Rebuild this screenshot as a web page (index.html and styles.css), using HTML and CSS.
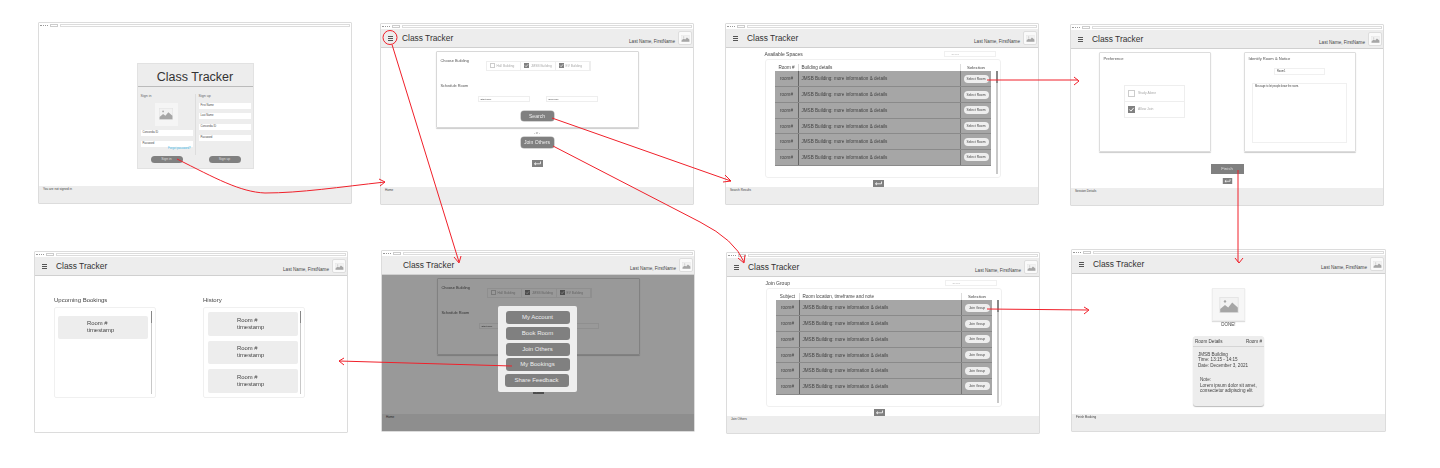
FILE: index.html
```html
<!DOCTYPE html>
<html lang="en">
<head>
  <meta charset="UTF-8">
  <title>Class Tracker wireframes</title>
  <link rel="stylesheet" href="styles.css">
</head>
<body>

  <svg class="defs" width="0" height="0">
    <symbol id="picture" viewBox="0 0 24 20">
      <rect x="0.5" y="0.5" width="23" height="19" fill="#f2f2f2" stroke="#e2e2e2"/>
      <circle cx="7" cy="5.5" r="1.5" fill="#a6a6a6"/>
      <path d="M1 19V15L7 10L11 13L16 7L23 13V19Z" fill="#a6a6a6"/>
    </symbol>
    <symbol id="back" viewBox="0 0 11 7">
      <rect width="11" height="7" fill="#808080"/>
      <path d="M8.5 1.5V3.8H2.5M4 2.5L2.5 3.8L4 5.1" fill="none" stroke="#fff" stroke-width="0.8"/>
    </symbol>
    <symbol id="tick" viewBox="0 0 6 6">
      <rect width="6" height="6" fill="#808080"/>
      <path d="M1.2 3L2.5 4.4L4.9 1.6" fill="none" stroke="#fff" stroke-width="0.8"/>
    </symbol>
  </svg>

  <div class="board">

    <!-- sign in -->
    <section class="win win-signin">
      <div class="chrome"><i></i><b></b><u></u></div>
      <div class="content signin">
        <div class="login-card">
          <h1>Class Tracker</h1>
          <div class="login-cols">
            <div class="login-col first">
              <p class="tiny">Sign in</p>
              <div class="pic-box"><svg width="14" height="12"><use href="#picture"/></svg></div>
              <div class="field">Concordia ID</div>
              <div class="field gap">Password</div>
              <a class="forgot">Forgot password?</a>
              <div class="pill">Sign in</div>
            </div>
            <div class="login-col">
              <p class="tiny">Sign up</p>
              <div class="field">First Name</div>
              <div class="field">Last Name</div>
              <div class="field">Concordia ID</div>
              <div class="field">Password</div>
              <div class="pill">Sign up</div>
            </div>
          </div>
        </div>
      </div>
      <div class="status">You are not signed in</div>
    </section>

    <!-- home -->
    <section class="win win-home">
      <div class="chrome"><i></i><b></b><u></u></div>
      <header class="appbar">
        <span class="burger"></span>
        <span class="title">Class Tracker</span>
        <span class="user">Last Name, FirstName</span>
        <span class="avatar"><svg width="9" height="7"><use href="#picture"/></svg></span>
      </header>
      <div class="content home">
        <div class="home-card">
          <p class="label">Choose Building</p>
          <div class="buildings">
            <span><em class="box"></em>Hall Building</span>
            <span><svg width="5" height="5"><use href="#tick"/></svg>JMSB Building</span>
            <span><svg width="5" height="5"><use href="#tick"/></svg>EV Building</span>
          </div>
          <p class="label schedule">Schedule Room</p>
          <div class="times">
            <div class="time">Start Time</div>
            <div class="time">End Time</div>
          </div>
          <div class="btn search">Search</div>
        </div>
        <div class="or">- or -</div>
        <div class="btn join">Join Others</div>
        <svg class="back" width="11" height="7"><use href="#back"/></svg>
      </div>
      <div class="status">Home</div>
    </section>

    <!-- search results -->
    <section class="win win-results">
      <div class="chrome"><i></i><b></b><u></u></div>
      <header class="appbar">
        <span class="burger"></span>
        <span class="title">Class Tracker</span>
        <span class="user">Last Name, FirstName</span>
        <span class="avatar"><svg width="9" height="7"><use href="#picture"/></svg></span>
      </header>
      <div class="content list">
        <div class="list-head"><span>Available Spaces</span><span class="find">Search</span></div>
        <div class="panel">
          <table>
            <thead><tr><th class="c1">Room #</th><th class="c2">Building details</th><th class="c3">Selection</th></tr></thead>
            <tbody>
              <tr><td class="c1">room#</td><td class="c2">JMSB Building: more information &amp; details</td><td class="c3"><span class="select">Select Room</span></td></tr>
              <tr><td class="c1">room#</td><td class="c2">JMSB Building: more information &amp; details</td><td class="c3"><span class="select">Select Room</span></td></tr>
              <tr><td class="c1">room#</td><td class="c2">JMSB Building: more information &amp; details</td><td class="c3"><span class="select">Select Room</span></td></tr>
              <tr><td class="c1">room#</td><td class="c2">JMSB Building: more information &amp; details</td><td class="c3"><span class="select">Select Room</span></td></tr>
              <tr><td class="c1">room#</td><td class="c2">JMSB Building: more information &amp; details</td><td class="c3"><span class="select">Select Room</span></td></tr>
              <tr><td class="c1">room#</td><td class="c2">JMSB Building: more information &amp; details</td><td class="c3"><span class="select">Select Room</span></td></tr>
            </tbody>
          </table>
          <span class="scroll"></span>
        </div>
        <svg class="back" width="11" height="7"><use href="#back"/></svg>
      </div>
      <div class="status">Search Results</div>
    </section>

    <!-- session details -->
    <section class="win win-session">
      <div class="chrome"><i></i><b></b><u></u></div>
      <header class="appbar">
        <span class="burger"></span>
        <span class="title">Class Tracker</span>
        <span class="user">Last Name, FirstName</span>
        <span class="avatar"><svg width="9" height="7"><use href="#picture"/></svg></span>
      </header>
      <div class="content session">
        <div class="session-cards">
          <div class="session-card">
            <p class="label">Preference</p>
            <div class="prefs">
              <div class="pref"><em class="box big"></em>Study Alone</div>
              <div class="pref"><svg width="7" height="7"><use href="#tick"/></svg>Allow Join</div>
            </div>
          </div>
          <div class="session-card">
            <p class="label">Identify Room &amp; Notice</p>
            <div class="name-box">Room1</div>
            <div class="message">Message to let people know the room.</div>
          </div>
        </div>
        <div class="finish">Finish</div>
        <svg class="back" width="11" height="6"><use href="#back"/></svg>
      </div>
      <div class="status">Session Details</div>
    </section>

    <!-- bookings -->
    <section class="win win-bookings">
      <div class="chrome"><i></i><b></b><u></u></div>
      <header class="appbar">
        <span class="burger"></span>
        <span class="title">Class Tracker</span>
        <span class="user">Last Name, FirstName</span>
        <span class="avatar"><svg width="9" height="7"><use href="#picture"/></svg></span>
      </header>
      <div class="content bookings">
        <div class="book-col">
          <h2>Upcoming Bookings</h2>
          <div class="book-panel upcoming">
            <div class="book-item">Room #<br>timestamp</div>
            <span class="scroll"></span>
          </div>
        </div>
        <div class="book-col">
          <h2>History</h2>
          <div class="book-panel">
            <div class="book-item">Room #<br>timestamp</div>
            <div class="book-item">Room #<br>timestamp</div>
            <div class="book-item">Room #<br>timestamp</div>
            <span class="scroll"></span>
          </div>
        </div>
      </div>
    </section>

    <!-- home with menu open -->
    <section class="win win-menu">
      <div class="chrome"><i></i><b></b><u></u></div>
      <header class="appbar">
        <span class="burger off"></span>
        <span class="title">Class Tracker</span>
        <span class="user">Last Name, FirstName</span>
        <span class="avatar"><svg width="9" height="7"><use href="#picture"/></svg></span>
      </header>
      <div class="content home">
        <div class="home-card">
          <p class="label">Choose Building</p>
          <div class="buildings">
            <span><em class="box"></em>Hall Building</span>
            <span><svg width="5" height="5"><use href="#tick"/></svg>JMSB Building</span>
            <span><svg width="5" height="5"><use href="#tick"/></svg>EV Building</span>
          </div>
          <p class="label schedule">Schedule Room</p>
          <div class="times">
            <div class="time">Start Time</div>
            <div class="time">End Time</div>
          </div>
          <div class="btn search">Search</div>
        </div>
        <div class="or">- or -</div>
        <div class="btn join">Join Others</div>
        <svg class="back" width="11" height="7"><use href="#back"/></svg>
      </div>
      <div class="status">Home</div>
      <div class="dim"></div>
      <nav class="menu">
        <a>My Account</a>
        <a>Book Room</a>
        <a>Join Others</a>
        <a>My Bookings</a>
        <a class="shift">Share Feedback</a>
      </nav>
    </section>

    <!-- join group -->
    <section class="win win-join">
      <div class="chrome"><i></i><b></b><u></u></div>
      <header class="appbar">
        <span class="burger"></span>
        <span class="title">Class Tracker</span>
        <span class="user">Last Name, FirstName</span>
        <span class="avatar"><svg width="9" height="7"><use href="#picture"/></svg></span>
      </header>
      <div class="content list">
        <div class="list-head"><span>Join Group</span><span class="find">Search</span></div>
        <div class="panel">
          <table>
            <thead><tr><th class="c1">Subject</th><th class="c2">Room location, timeframe and note</th><th class="c3">Selection</th></tr></thead>
            <tbody>
              <tr><td class="c1">room#</td><td class="c2">JMSB Building: more information &amp; details</td><td class="c3"><span class="select">Join Group</span></td></tr>
              <tr><td class="c1">room#</td><td class="c2">JMSB Building: more information &amp; details</td><td class="c3"><span class="select">Join Group</span></td></tr>
              <tr><td class="c1">room#</td><td class="c2">JMSB Building: more information &amp; details</td><td class="c3"><span class="select">Join Group</span></td></tr>
              <tr><td class="c1">room#</td><td class="c2">JMSB Building: more information &amp; details</td><td class="c3"><span class="select">Join Group</span></td></tr>
              <tr><td class="c1">room#</td><td class="c2">JMSB Building: more information &amp; details</td><td class="c3"><span class="select">Join Group</span></td></tr>
              <tr><td class="c1">room#</td><td class="c2">JMSB Building: more information &amp; details</td><td class="c3"><span class="select">Join Group</span></td></tr>
            </tbody>
          </table>
          <span class="scroll"></span>
        </div>
        <svg class="back" width="11" height="7"><use href="#back"/></svg>
      </div>
      <div class="status">Join Others</div>
    </section>

    <!-- finish booking -->
    <section class="win win-done">
      <div class="chrome"><i></i><b></b><u></u></div>
      <header class="appbar">
        <span class="burger"></span>
        <span class="title">Class Tracker</span>
        <span class="user">Last Name, FirstName</span>
        <span class="avatar"><svg width="9" height="7"><use href="#picture"/></svg></span>
      </header>
      <div class="content done">
        <div class="done-pic"><svg width="20" height="16"><use href="#picture"/></svg></div>
        <p class="done-text">DONE!</p>
        <div class="details">
          <div class="details-head"><span>Room Details</span><span>Room #</span></div>
          <div class="details-body">
            JMSB Building<br>Time: 13:15 - 14:15<br>Date: December 3, 2021
            <p>Note:<br>Lorem ipsum dolor sit amet,<br>consectetur adipiscing elit</p>
          </div>
        </div>
      </div>
      <div class="status">Finish Booking</div>
    </section>

    <!-- red flow arrows between the screens -->
    <svg class="flow" width="1440" height="468" viewBox="0 0 1440 468">
      <circle cx="390" cy="37.5" r="7"/>
      <path d="M177 159C215 178 240 192 265 193C300 193 340 187 385 182M379 179L385 182L380 186"/>
      <path d="M392 44.500L459 262M454 257L459 263L461 256"/>
      <path d="M552 118L731 181M725 175L731 181L723 182"/>
      <path d="M553 146L700 222Q735 240 744 262M738 258L744 263L745 255"/>
      <path d="M987 80H1078M1074 77L1079 81L1074 85"/>
      <path d="M1238 170V262M1235 258L1239 263L1243 258"/>
      <path d="M987 309L1088 310M1084 307L1089 310L1084 314"/>
      <path d="M512 366L339 361M344 358L339 361L344 365"/>
    </svg>

  </div>

</body>
</html>
```

FILE: styles.css
```css
:root {
  --line: #dcdcdc;
  --bar: #ededed;
  --gray: #808080;
  --table: #a6a6a6;
  --ink: #444;
  --dim: #999;
}

html, body {
  margin: 0;
  padding: 0;
  background: #fff;
  color: var(--ink);
  font-family: "Liberation Sans", Arial, sans-serif;
}

p, h1, h2 {
  margin: 0;
  font-weight: normal;
}

em {
  font-style: normal;
}

.defs {
  position: absolute;
}

.board {
  position: relative;
  width: 1440px;
  height: 468px;
  overflow: hidden;
  filter: blur(0.4px);
}

/* windows sit on a free canvas */
.win {
  position: absolute;
  width: 314px;
  height: 182px;
  box-sizing: border-box;
  border: 1px solid var(--line);
  border-radius: 1px;
  background: #fff;
  display: flex;
  flex-direction: column;
}

.win-signin { left: 38px; top: 22px; }
.win-home { left: 380px; top: 23px; }
.win-results { left: 725px; top: 23px; }
.win-session { left: 1070px; top: 24px; }
.win-bookings { left: 34px; top: 251px; }
.win-menu { left: 381px; top: 250px; }
.win-join { left: 726px; top: 252px; }
.win-done { left: 1071px; top: 249px; height: 183px; width: 315px; }

.chrome {
  height: 5px;
  flex: none;
  display: flex;
  align-items: center;
  gap: 2px;
  padding: 0 1px;
}

.chrome i {
  width: 8px;
  height: 1px;
  border-top: 1px dotted #999;
}

.chrome b {
  width: 6px;
  height: 1px;
  border: 1px solid #ccc;
}

.chrome u {
  flex: 1;
  height: 1px;
  border: 1px solid var(--line);
}

.appbar {
  height: 19px;
  flex: none;
  background: var(--bar);
  border-bottom: 1px solid #d0d0d0;
  box-sizing: border-box;
  display: flex;
  align-items: center;
  padding: 0 1px 0 7px;
}

.burger {
  width: 5px;
  height: 1px;
  background: #555;
  box-shadow: 0 -2px 0 #555, 0 2px 0 #555;
  margin-right: 9px;
  flex: none;
}

.burger.off {
  visibility: hidden;
}

.title {
  font-size: 8.4px;
  color: #333;
  flex: 1;
}

.user {
  font-size: 4.6px;
  align-self: flex-end;
  margin: 0 3px 3.500px 0;
}

.avatar {
  width: 14px;
  height: 14px;
  box-sizing: border-box;
  background: #fafafa;
  border: 1px solid #ddd;
  border-radius: 2px;
  display: flex;
  align-items: center;
  justify-content: center;
}

.content {
  flex: 1;
  min-height: 0;
}

.status {
  height: 17px;
  flex: none;
  background: var(--bar);
  font-size: 3.100px;
  padding: 1px 4px;
  box-sizing: border-box;
}

/* sign in */
.signin {
  display: flex;
  justify-content: center;
  padding-top: 35px;
}

.login-card {
  width: 117px;
  height: 106px;
  background: var(--bar);
  border: 1px solid #e2e2e2;
  box-sizing: border-box;
}

.login-card h1 {
  height: 23px;
  line-height: 26px;
  text-align: center;
  font-size: 12.5px;
  color: #333;
  border-bottom: 1px solid #bbb;
  box-sizing: border-box;
}

.login-cols {
  display: flex;
  padding-top: 7px;
}

.login-col {
  width: 58px;
  height: 70px;
  box-sizing: border-box;
  padding: 0 3px;
  display: flex;
  flex-direction: column;
  position: relative;
}

.login-col.first {
  border-right: 1px solid #ddd;
  height: 61px;
}

.tiny {
  font-size: 3.6px;
  line-height: 4px;
  margin-bottom: 4.500px;
  color: #666;
}

.pic-box {
  width: 23px;
  height: 23px;
  margin: 0 auto 4.500px;
  background: #f5f5f5;
  display: flex;
  align-items: center;
  justify-content: center;
}

.field {
  height: 6px;
  line-height: 6px;
  width: 52px;
  flex: none;
  background: #fff;
  font-size: 2.7px;
  padding-left: 2px;
  box-sizing: border-box;
  margin-bottom: 4.800px;
}

.forgot {
  font-size: 2.8px;
  line-height: 3px;
  color: #35b6e8;
  text-align: right;
  margin: -4.800px 1px 0;
}

.pill {
  position: absolute;
  top: 62px;
  left: 13px;
  width: 32px;
  height: 7px;
  line-height: 7px;
  border-radius: 4px;
  background: var(--gray);
  color: #ddd;
  font-size: 3.400px;
  text-align: center;
}

/* home */
.home {
  display: flex;
  flex-direction: column;
  align-items: center;
  padding-top: 2.800px;
  box-sizing: border-box;
}

.home-card {
  width: 203px;
  height: 77px;
  box-sizing: border-box;
  border: 1px solid #d8d8d8;
  border-radius: 1px;
  box-shadow: 0 1px 1px #ccc;
  padding: 6px 4px 0;
  display: flex;
  flex-direction: column;
}

.label {
  font-size: 3.9px;
  line-height: 5px;
  color: #555;
}

.buildings {
  display: flex;
  align-self: flex-start;
  margin: -2px 0 0 45px;
  height: 10px;
  border: 1px solid #eee;
  box-sizing: border-box;
}

.buildings span {
  display: flex;
  align-items: center;
  gap: 2px;
  width: 34.500px;
  padding-left: 3px;
  box-sizing: border-box;
  font-size: 3.200px;
  color: #aaa;
  border-right: 1px solid #eee;
}

.box {
  width: 5px;
  height: 5px;
  box-sizing: border-box;
  border: 1px solid #ccc;
  display: block;
  flex: none;
}

.box.big {
  width: 7px;
  height: 7px;
}

.schedule {
  margin-top: 12px;
}

.times {
  display: flex;
  gap: 16px;
  margin: 8px 0 0 37px;
}

.time {
  width: 52px;
  height: 6px;
  line-height: 5px;
  box-sizing: border-box;
  border: 1px solid #eee;
  font-size: 2.4px;
  padding-left: 2px;
}

.btn {
  width: 33px;
  height: 10px;
  line-height: 10px;
  background: var(--gray);
  color: #eee;
  border-radius: 3px;
  font-size: 5.100px;
  text-align: center;
  box-shadow: 0 0 0 0.5px #aaa;
}

.search {
  margin: 9.500px auto 0;
}

.or {
  font-size: 2.8px;
  color: #888;
  margin-top: 2px;
  height: 6px;
  line-height: 6px;
}

.join {
  height: 11px;
  line-height: 11px;
  margin-top: 1px;
}

.home .back {
  margin-top: 12px;
  flex: none;
}

/* tables */
.list {
  padding: 2.500px 0 0 38.500px;
  box-sizing: border-box;
  display: flex;
  flex-direction: column;
}

.list-head {
  width: 231px;
  height: 6px;
  display: flex;
  justify-content: space-between;
  align-items: center;
  font-size: 5px;
}

.find {
  width: 52px;
  height: 6px;
  line-height: 5px;
  box-sizing: border-box;
  border: 1px solid #f0f0f0;
  color: #bbb;
  font-size: 2.4px;
  padding-left: 7px;
}

.panel {
  position: relative;
  width: 236px;
  height: 120px;
  margin-top: 2.500px;
  box-sizing: border-box;
  border: 1px solid #f0f0f0;
  border-radius: 3px;
  padding: 4px 0 0 9.500px;
}

table {
  border-collapse: collapse;
  width: 216px;
  table-layout: fixed;
}

th {
  height: 7.300px;
  padding: 0;
  font-weight: normal;
  font-size: 4.600px;
}

th.c2 {
  text-align: left;
  padding-left: 2.500px;
}

th.c3 {
  font-size: 4.400px;
}

.c1 { width: 23px; }
.c3 { width: 30px; }

th.c1, th.c2 {
  border-right: 1px solid #ddd;
}

td {
  height: 15.67px;
  padding: 0;
  box-sizing: border-box;
  background: var(--table);
  border-bottom: 1px solid #8a8a8a;
  font-size: 4.600px;
  color: #444;
}

td.c1 {
  text-align: center;
  border-right: 1px solid #666;
}

td.c2 {
  padding-left: 2.500px;
  border-right: 1px solid #777;
}

td.c3 {
  text-align: center;
}

.select {
  display: inline-block;
  width: 25px;
  height: 8px;
  line-height: 8px;
  border-radius: 4px;
  background: #eee;
  font-size: 3.300px;
  vertical-align: middle;
}

.scroll {
  position: absolute;
  right: 2px;
  top: 10.500px;
  bottom: 2.500px;
  width: 1.500px;
  background: #c8c8c8;
}

.scroll::before {
  content: "";
  display: block;
  height: 12px;
  background: #888;
}

.list .back {
  margin: 2.500px 0 0 108px;
  flex: none;
}

/* session details */
.session {
  display: flex;
  flex-direction: column;
  align-items: center;
}

.session-cards {
  display: flex;
  gap: 33px;
  padding-top: 2.500px;
}

.session-card {
  width: 112px;
  height: 100px;
  box-sizing: border-box;
  border: 1px solid #ddd;
  border-radius: 1px;
  box-shadow: 0 1px 1px #ccc;
  padding: 3px 4px;
  display: flex;
  flex-direction: column;
  align-items: center;
}

.session-card .label {
  align-self: flex-start;
  font-size: 4.100px;
}

.prefs {
  margin-top: 24px;
  width: 61px;
  border: 1px solid #eee;
  box-sizing: border-box;
}

.pref {
  height: 15px;
  display: flex;
  align-items: center;
  gap: 3px;
  padding-left: 3px;
  font-size: 3.400px;
  color: #aaa;
}

.pref + .pref {
  border-top: 1px solid #eee;
}

.name-box {
  width: 51px;
  height: 7px;
  line-height: 6px;
  margin-top: 7.500px;
  box-sizing: border-box;
  border: 1px solid #f0f0f0;
  font-size: 2.600px;
  padding-left: 2px;
}

.message {
  width: 95px;
  height: 60px;
  margin-top: 8px;
  box-sizing: border-box;
  border: 1px solid #f0f0f0;
  font-size: 2.600px;
  padding: 1px 2px;
}

.finish {
  width: 33px;
  height: 10px;
  line-height: 10px;
  margin-top: 12px;
  background: var(--gray);
  color: #ddd;
  font-size: 4.400px;
  text-align: center;
}

.session .back {
  margin-top: 4.500px;
  flex: none;
}

/* bookings */
.bookings {
  display: flex;
  gap: 47px;
  padding: 20px 0 0 19px;
}

.book-col h2 {
  font-size: 6px;
  line-height: 9px;
  color: #444;
}

.book-panel {
  position: relative;
  width: 102px;
  height: 91px;
  margin-top: 1.500px;
  box-sizing: border-box;
  border: 1px solid #f0f0f0;
  border-radius: 2px;
  padding: 4.500px 6px 0 4px;
  display: flex;
  flex-direction: column;
  gap: 5.200px;
}

.book-panel.upcoming {
  padding: 8px 7px 0 3px;
}

.book-item {
  height: 23.500px;
  flex: none;
  background: var(--bar);
  border-radius: 2px;
  box-sizing: border-box;
  padding: 4.500px 0 0 29px;
  font-size: 5.900px;
  line-height: 7.300px;
  color: #444;
}

.book-panel .scroll {
  top: 3px;
  right: 3px;
}

/* menu overlay */
.dim {
  position: absolute;
  left: 0;
  right: 0;
  top: 24px;
  bottom: 0;
  background: rgba(0, 0, 0, 0.4);
}

.menu {
  position: absolute;
  left: 116px;
  top: 55px;
  width: 79px;
  height: 86px;
  box-sizing: border-box;
  padding: 5px 7.500px;
  background: #eee;
  border-radius: 2px;
  display: flex;
  flex-direction: column;
  gap: 2.800px;
}

.menu a {
  height: 13px;
  line-height: 13px;
  background: var(--gray);
  color: #eee;
  border-radius: 3px;
  font-size: 6px;
  text-align: center;
  flex: none;
}

.menu a.shift {
  margin: 0 1px 0 -1px;
}

/* finish booking */
.done {
  display: flex;
  flex-direction: column;
  align-items: center;
  padding-top: 14px;
  box-sizing: border-box;
}

.done-pic {
  width: 33px;
  height: 33px;
  flex: none;
  box-sizing: border-box;
  background: #f7f7f7;
  border: 1px solid #eee;
  box-shadow: 0 1px 1px #ddd;
  display: flex;
  align-items: center;
  justify-content: center;
}

.done-text {
  font-size: 4.500px;
  line-height: 6px;
  margin-top: 1px;
}

.details {
  width: 71px;
  height: 70px;
  flex: none;
  margin-top: 8px;
  box-sizing: border-box;
  background: var(--bar);
  border-radius: 3px;
  box-shadow: 0 1px 1px #bbb;
  font-size: 4.600px;
}

.details-head {
  display: flex;
  justify-content: space-between;
  height: 10.500px;
  line-height: 11px;
  padding: 0 2px;
  border-bottom: 1px solid #d5d5d5;
  box-sizing: border-box;
}

.details-body {
  padding: 5px 5px 0;
  line-height: 5.800px;
}

.details-body p {
  margin-top: 8px;
  padding-left: 2px;
}

/* arrows */
.flow {
  position: absolute;
  left: 0;
  top: 0;
  fill: none;
  stroke: #f0202a;
  stroke-width: 1;
}
```
